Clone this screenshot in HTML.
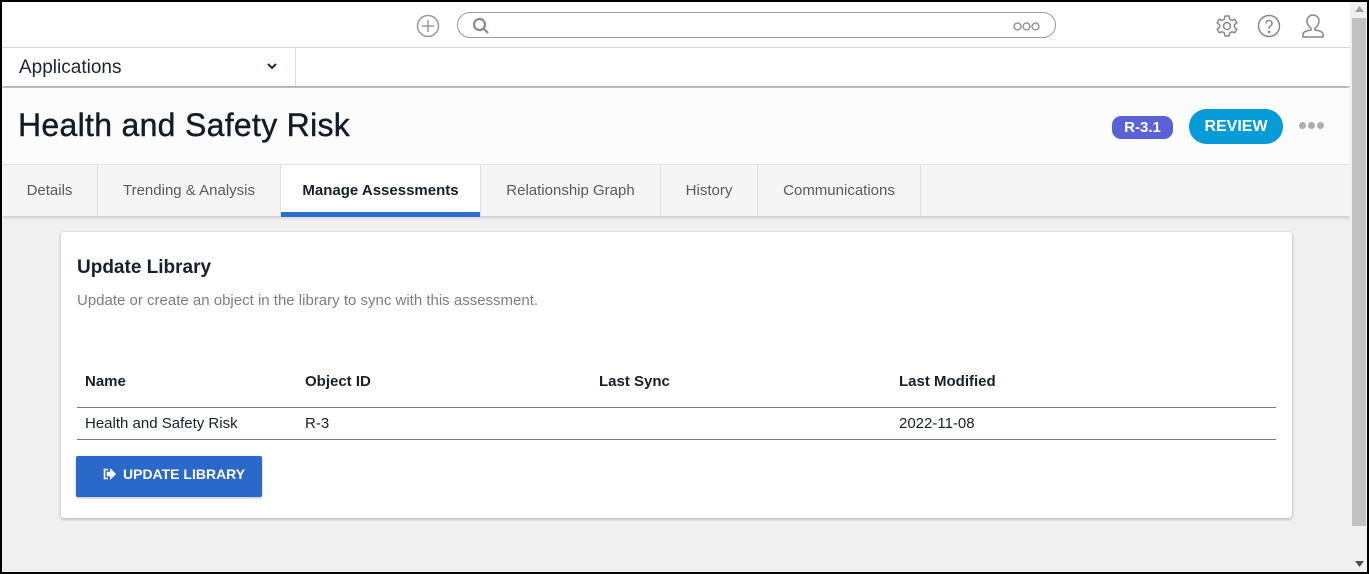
<!DOCTYPE html>
<html><head><meta charset="utf-8"><style>
*{box-sizing:border-box;margin:0;padding:0}
body{width:1369px;height:574px;overflow:hidden;font-family:"Liberation Sans",sans-serif;background:#000;position:relative}
.frame{position:absolute;left:2px;top:2px;width:1365px;height:570px;background:#f0f0f0;overflow:hidden}
.main{position:absolute;left:0;top:0;width:1348px;height:570px;background:#f0f0f0}
.top{position:absolute;left:0;top:0;width:1348px;height:46px;background:#fff;border-bottom:1px solid #e0e0e0}
.search{position:absolute;left:455px;top:10px;width:599px;height:26px;border:1px solid #9a9a9a;border-radius:13px}
.apps{position:absolute;left:0;top:46px;width:1348px;height:38px;background:#fff;box-shadow:0 2px 4px rgba(0,0,0,.35)}
.apps .lbl{position:absolute;left:17px;top:9px;font-size:19px;color:#1a2530}
.apps .div{position:absolute;left:293px;top:0;width:1px;height:38px;background:#ddd}
.hdr{position:absolute;left:0;top:86px;width:1348px;height:77px;background:#fcfcfc}
.hdr h1{position:absolute;left:16px;top:19px;font-size:32px;font-weight:normal;color:#111c26;letter-spacing:0.3px;-webkit-text-stroke:0.4px #111c26}
.badge{position:absolute;left:1110px;top:28px;width:61px;height:23px;border-radius:9px;background:#5b62d6;color:#fff;font-weight:bold;font-size:15px;text-align:center;line-height:23px}
.rev{position:absolute;left:1187px;top:21px;width:94px;height:35px;border-radius:18px;background:#059ad8;color:#fff;font-weight:bold;font-size:16px;text-align:center;line-height:35px}
.dots{position:absolute;left:1297px;top:34px;line-height:0}
.dots i{display:inline-block;width:7px;height:7px;border-radius:50%;background:#a9aeb4;margin-right:2px}
.tabs{position:absolute;left:0;top:162px;width:1348px;height:52px;background:#f5f5f5;border-top:1px solid #e2e2e2;box-shadow:0 2px 3px rgba(0,0,0,.15)}
.tab{position:absolute;top:0;height:51px;line-height:52px;font-size:15px;color:#555b60;text-align:center;border-right:1px solid #e0e0e0}
.tab.act{background:#fff;color:#16212b;font-weight:bold}
.tab.act:after{content:"";position:absolute;left:0;right:0;bottom:-1px;height:5px;background:#2d6bcc}
.card{position:absolute;left:59px;top:230px;width:1231px;height:286px;background:#fff;border-radius:3px;box-shadow:0 1px 3px rgba(0,0,0,.3)}
.card h2{position:absolute;left:16px;top:25px;font-size:19px;color:#16212b}
.card .sub{position:absolute;left:16px;top:60px;font-size:15px;color:#7a7e82}
.th{position:absolute;top:141px;font-size:15px;font-weight:bold;color:#16212b}
.td{position:absolute;top:183px;font-size:15px;color:#16212b}
.line{position:absolute;left:16px;width:1199px;height:1px;background:#777}
.btn{position:absolute;left:15px;top:224px;width:186px;height:41px;background:#2a68c9;border-radius:2px;color:#fff;font-weight:bold;font-size:14px;line-height:36px;padding-left:47px;box-shadow:0 1px 2px rgba(0,0,0,.3)}
.sb{position:absolute;left:1348px;top:0;width:17px;height:570px;background:#f0f0f0}
.thumb{position:absolute;left:1350px;top:16px;width:14px;height:508px;background:#c1c1c1}
</style></head><body><div class="frame"><div class="main">
<div class="top">
<svg style="position:absolute;left:414px;top:12px" width="24" height="24" viewBox="0 0 24 24" fill="none" stroke="#9a9a9a" stroke-width="1.5"><circle cx="12" cy="12" r="10.5"/><path d="M12 6v12M6 12h12"/></svg>
<div class="search">
<svg style="position:absolute;left:14px;top:4px" width="18" height="18" viewBox="0 0 18 18" fill="none" stroke="#8a8a8a" stroke-width="2.2"><circle cx="7.5" cy="7.5" r="5.5"/><path d="M11.5 11.5l4.5 4.5"/></svg>
<svg style="position:absolute;left:555px;top:9px" width="28" height="9" viewBox="0 0 28 9" fill="none" stroke="#8a8a8a" stroke-width="1.3"><circle cx="4.5" cy="4.5" r="3.5"/><circle cx="13.5" cy="4.5" r="3.5"/><circle cx="22.5" cy="4.5" r="3.5"/></svg>
</div>
<svg style="position:absolute;left:1213px;top:12px" width="24" height="24" viewBox="0 0 24 24" fill="none" stroke="#888" stroke-width="1.5"><path d="M10 2h4l.6 3 2.3 1.3 2.9-1 2 3.4-2.3 2v2.6l2.3 2-2 3.4-2.9-1-2.3 1.3-.6 3h-4l-.6-3-2.3-1.3-2.9 1-2-3.4 2.3-2v-2.6l-2.3-2 2-3.4 2.9 1L9.4 5z"/><circle cx="12" cy="12" r="3.5"/></svg>
<svg style="position:absolute;left:1255px;top:12px" width="24" height="24" viewBox="0 0 24 24" fill="none" stroke="#888" stroke-width="1.5"><circle cx="12" cy="12" r="10.5"/><path d="M9 9.5a3 3 0 1 1 4.2 2.7c-.8.4-1.2 1-1.2 1.8v1"/><circle cx="12" cy="18" r=".6" fill="#888"/></svg>
<svg style="position:absolute;left:1298px;top:11px" width="26" height="26" viewBox="0 0 26 26" fill="none" stroke="#888" stroke-width="1.5"><path d="M13 2a6 6 0 0 1 6 6c0 3-2 6-4 7v2c4 .5 8 2 8 4v3H3v-3c0-2 4-3.5 8-4v-2c-2-1-4-4-4-7a6 6 0 0 1 6-6z"/></svg>
</div>
<div class="apps"><span class="lbl">Applications</span>
<svg style="position:absolute;left:264px;top:13px" width="12" height="10" viewBox="0 0 12 10" fill="none" stroke="#1a2530" stroke-width="2"><path d="M2 3l4 4 4-4"/></svg>
<div class="div"></div></div>
<div class="hdr"><h1>Health and Safety Risk</h1><div class="badge">R-3.1</div><div class="rev">REVIEW</div><div class="dots"><i></i><i></i><i></i></div></div>
<div class="tabs">
<div class="tab" style="left:0;width:96px">Details</div>
<div class="tab" style="left:96px;width:183px">Trending &amp; Analysis</div>
<div class="tab act" style="left:279px;width:200px">Manage Assessments</div>
<div class="tab" style="left:479px;width:180px">Relationship Graph</div>
<div class="tab" style="left:659px;width:97px">History</div>
<div class="tab" style="left:756px;width:163px">Communications</div>
</div>
<div class="card"><h2>Update Library</h2><div class="sub">Update or create an object in the library to sync with this assessment.</div>
<div class="th" style="left:24px">Name</div><div class="th" style="left:244px">Object ID</div><div class="th" style="left:538px">Last Sync</div><div class="th" style="left:838px">Last Modified</div>
<div class="line" style="top:175px"></div>
<div class="td" style="left:24px">Health and Safety Risk</div><div class="td" style="left:244px">R-3</div><div class="td" style="left:838px">2022-11-08</div>
<div class="line" style="top:207px"></div>
<div class="btn"><svg style="position:absolute;left:27px;top:12px" width="13" height="12" viewBox="0 0 13 12" fill="none" stroke="#fff" stroke-width="1.6"><path d="M5 1.5H1.5v9H5"/><path d="M4.5 4.5h3.5V2l4 4-4 4V7.5H4.5z" fill="#fff"/></svg>UPDATE LIBRARY</div>
</div>
</div>
<div class="sb"></div><div class="thumb"></div>
<svg style="position:absolute;left:1353px;top:4px" width="9" height="6"><path d="M0 6L4.5 0 9 6z" fill="#a0a0a0"/></svg>
<svg style="position:absolute;left:1353px;top:559px" width="9" height="6"><path d="M0 0L4.5 6 9 0z" fill="#505050"/></svg>
</div></body></html>
